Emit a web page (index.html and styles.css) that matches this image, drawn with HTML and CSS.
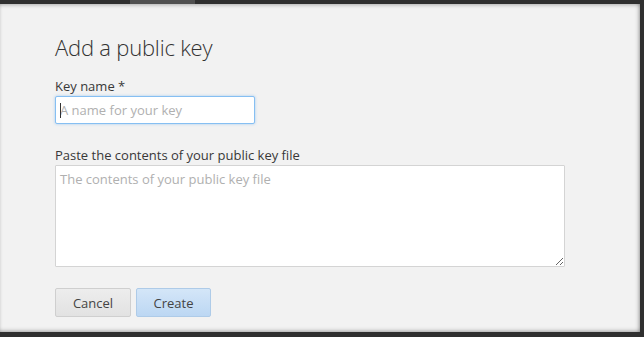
FILE: index.html
```html
<!DOCTYPE html>
<html>
<head>
<meta charset="utf-8">
<link rel="stylesheet" href="styles.css">
</head>
<body>
<div class="frame">
  <div class="topbar"><span class="tab"></span></div>
  <div class="panel">
    <h1 class="title">Add a public key</h1>
    <label class="label" for="kn">Key name *</label>
    <div class="name-wrap">
      <input id="kn" class="name-input" type="text" placeholder="A name for your key">
      <span class="caret"></span>
    </div>
    <label class="label label-gap" for="kc">Paste the contents of your public key file</label>
    <textarea id="kc" class="key-area" placeholder="The contents of your public key file"></textarea>
    <div class="actions">
      <button class="btn btn-cancel" type="button">Cancel</button>
      <button class="btn btn-create" type="button">Create</button>
    </div>
  </div>
</div>
</body>
</html>
```
FILE: styles.css
```css
html, body {
  margin: 0;
  padding: 0;
  width: 644px;
  height: 337px;
  overflow: hidden;
  background: #2f2f2f;
  font-family: "Open Sans", "DejaVu Sans", sans-serif;
}
.frame {
  display: flex;
  flex-direction: column;
  width: 640px;
  height: 332px;
}
.topbar {
  height: 4px;
  background: #2f2f2f;
  display: flex;
}
.tab {
  margin-left: 130px;
  width: 65px;
  height: 4px;
  background: #505050;
}
.panel {
  flex: 1;
  background: #f2f2f2;
  box-shadow: inset 0 3px 4px -2px rgba(0,0,0,0.25), inset -3px 0 4px -2px rgba(0,0,0,0.3), inset 0 -3px 4px -2px rgba(0,0,0,0.3);
  padding: 0 0 0 55px;
  display: flex;
  flex-direction: column;
  align-items: flex-start;
}
.title {
  margin: 29px 0 0 0;
  font-size: 22px;
  font-weight: 300;
  color: #333;
  line-height: 29px;
  letter-spacing: -0.2px;
}
.label {
  margin-top: 15px;
  font-size: 13px;
  color: #383838;
  line-height: 18px;
}
.label-gap {
  margin-top: 22px;
}
.name-wrap {
  position: relative;
  margin-top: 1px;
}
.name-input {
  box-sizing: border-box;
  width: 200px;
  height: 28px;
  margin: 0;
  border: 1px solid #86bff2;
  border-radius: 2px;
  box-shadow: 0 0 3px rgba(100,170,240,0.55);
  background: #fff;
  padding: 0 0 0 4px;
  font-family: "Open Sans", "DejaVu Sans", sans-serif;
  font-size: 13px;
  outline: none;
}
.name-input::placeholder {
  color: #b0b0b0;
}
.caret {
  position: absolute;
  left: 5px;
  top: 7px;
  width: 1px;
  height: 15px;
  background: #333;
}
.key-area {
  box-sizing: border-box;
  width: 510px;
  height: 102px;
  margin: 1px 0 0 0;
  border: 1px solid #d4d4d4;
  border-radius: 1px;
  background: #fff;
  padding: 4px 4px;
  font-family: "Open Sans", "DejaVu Sans", sans-serif;
  font-size: 13px;
  line-height: 18px;
  resize: both;
  outline: none;
}
.key-area::placeholder {
  color: #b0b0b0;
}
.actions {
  display: flex;
  gap: 5px;
  margin-top: 21px;
}
.btn {
  box-sizing: border-box;
  height: 29px;
  padding: 0;
  border-radius: 2px;
  font-family: "Open Sans", "DejaVu Sans", sans-serif;
  font-size: 13px;
  color: #444;
}
.btn-cancel {
  width: 76px;
  border: 1px solid #cfcfcf;
  background: linear-gradient(#ededed, #e2e2e2);
}
.btn-create {
  width: 75px;
  border: 1px solid #aecbe8;
  background: linear-gradient(#d4e6f8, #bcd7f3);
}
```
